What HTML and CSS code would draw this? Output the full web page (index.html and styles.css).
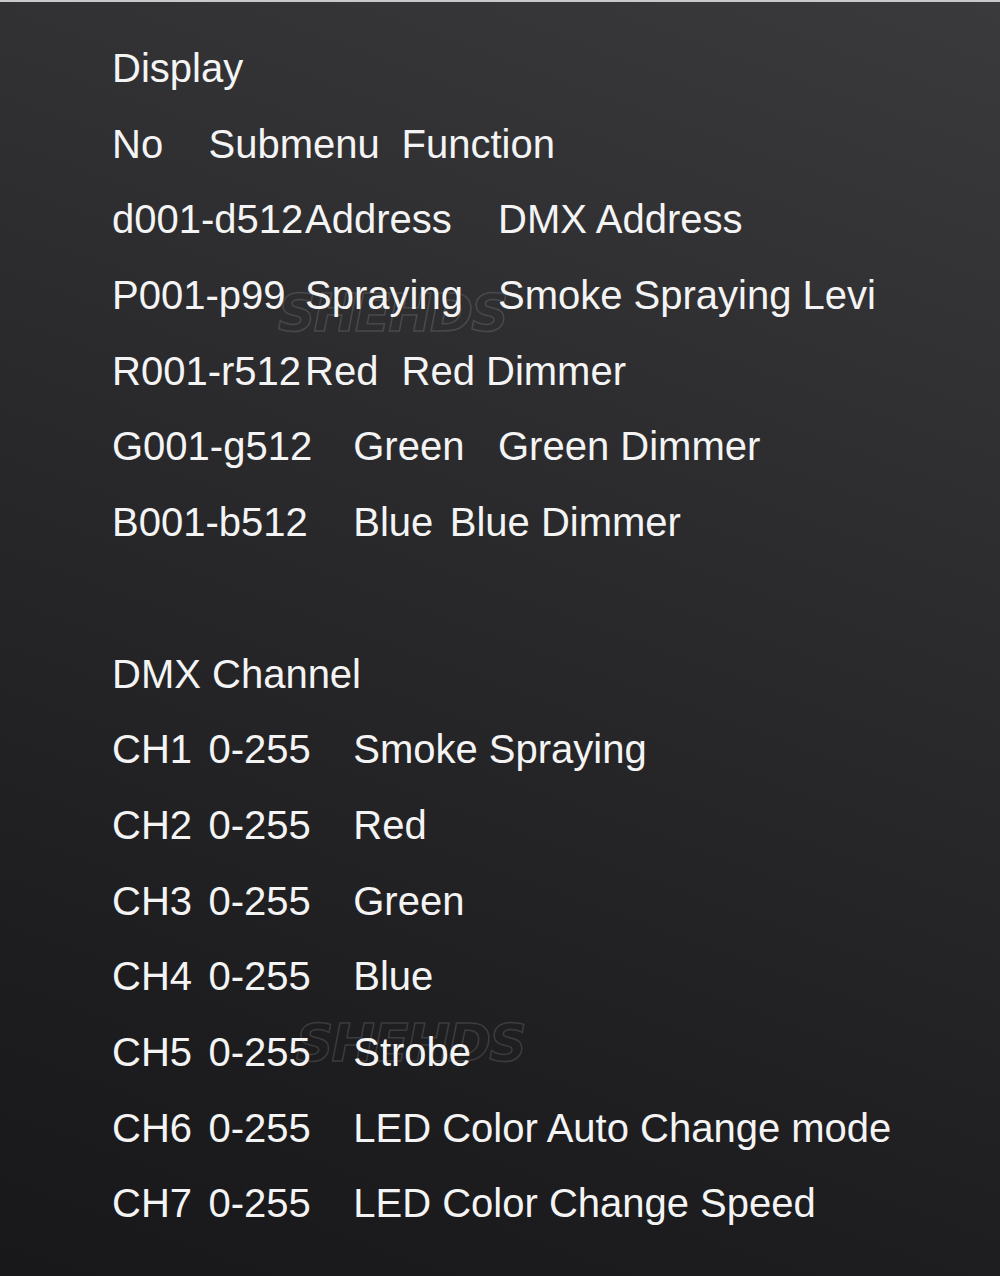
FILE: index.html
```html
<!DOCTYPE html>
<html lang="en">
<head>
  <meta charset="UTF-8">
  <meta name="viewport" content="width=device-width, initial-scale=1.0">
  <title>Display / DMX Channel</title>
  <link rel="stylesheet" href="styles.css">
</head>
<body>

<div class="sheet">
  <!-- Display menu -->
  <div class="row">Display</div>
  <div class="row"><span class="w2">No</span><span class="w4">Submenu</span><span>Function</span></div>
  <div class="row"><span class="w4">d001-d512</span><span class="w4">Address</span><span>DMX Address</span></div>
  <div class="row"><span class="w4">P001-p99</span><span class="w4">Spraying</span><span>Smoke Spraying Levi</span></div>
  <div class="row"><span class="w4">R001-r512</span><span class="w2">Red</span><span>Red Dimmer</span></div>
  <div class="row"><span class="w5">G001-g512</span><span class="w3">Green</span><span>Green Dimmer</span></div>
  <div class="row"><span class="w5">B001-b512</span><span class="w2">Blue</span><span>Blue Dimmer</span></div>
  <div class="row"></div>

  <!-- DMX channels -->
  <div class="row">DMX Channel</div>
  <div class="row"><span class="w2">CH1</span><span class="w3">0-255</span><span>Smoke Spraying</span></div>
  <div class="row"><span class="w2">CH2</span><span class="w3">0-255</span><span>Red</span></div>
  <div class="row"><span class="w2">CH3</span><span class="w3">0-255</span><span>Green</span></div>
  <div class="row"><span class="w2">CH4</span><span class="w3">0-255</span><span>Blue</span></div>
  <div class="row"><span class="w2">CH5</span><span class="w3">0-255</span><span>Strobe</span></div>
  <div class="row"><span class="w2">CH6</span><span class="w3">0-255</span><span>LED Color Auto Change mode</span></div>
  <div class="row"><span class="w2">CH7</span><span class="w3">0-255</span><span>LED Color Change Speed</span></div>
</div>

<div class="mark mark-top">SHEHDS</div>
<div class="mark mark-bottom">SHEHDS</div>

</body>
</html>
```

FILE: styles.css
```css
body {
  margin: 0;
  padding: 0;
  height: 1274px;
  position: relative;
  overflow: hidden;
  border-top: 2px solid #c9c9c9;
  background: linear-gradient(200deg, #3a3a3c 0%, #2b2b2d 40%, #1d1d1f 80%, #18181a 100%);
  color: #f4f4f4;
  font-family: "Liberation Sans", Arial, sans-serif;
}
.sheet {
  padding: 29px 0 0 112px;
  font-size: 40px;
  line-height: 75.7px;
}
.row {
  display: flex;
  height: 75.7px;
  white-space: nowrap;
}
.row span {
  flex-shrink: 0;
}
/* tab stops are 48.25px apart */
.w2 {
  width: 96.5px;
}
.w3 {
  width: 144.75px;
}
.w4 {
  width: 193px;
}
.w5 {
  width: 241.25px;
}
/* faint outlined watermark */
.mark {
  position: absolute;
  font-family: "DejaVu Sans", sans-serif;
  font-weight: bold;
  font-style: italic;
  font-size: 52px;
  letter-spacing: -2px;
  line-height: 1;
  color: transparent;
  -webkit-text-stroke: 1.5px rgba(255, 255, 255, 0.13);
}
.mark-top {
  left: 278px;
  top: 285px;
}
.mark-bottom {
  left: 296px;
  top: 1015px;
}
```
